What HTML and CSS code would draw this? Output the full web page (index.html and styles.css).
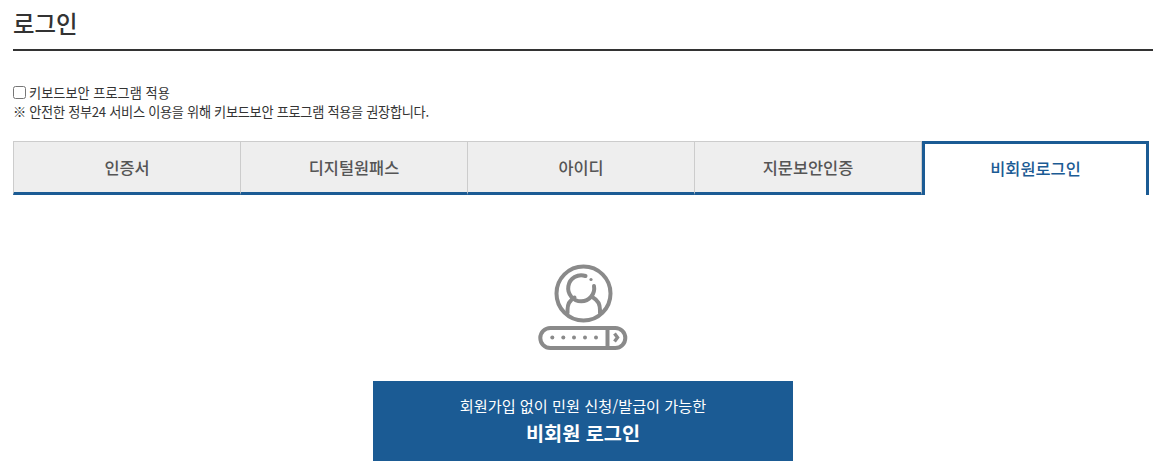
FILE: index.html
```html
<!DOCTYPE html>
<html lang="ko">
<head>
    <meta charset="UTF-8">
    <meta name="viewport" content="width=device-width, initial-scale=1.0">
    <title>로그인</title>
    <link rel="stylesheet" href="styles.css">
</head>
<body>
    <h1 class="page-title">로그인</h1>

    <div class="keyboard-option">
        <label class="check-label"><input type="checkbox"> 키보드보안 프로그램 적용</label>
        <p class="notice">※ 안전한 정부24 서비스 이용을 위해 키보드보안 프로그램 적용을 권장합니다.</p>
    </div>

    <ul class="tabs">
        <li class="tab">인증서</li>
        <li class="tab">디지털원패스</li>
        <li class="tab">아이디</li>
        <li class="tab">지문보안인증</li>
        <li class="tab active">비회원로그인</li>
    </ul>

    <div class="guest-panel">
        <svg class="guest-icon" width="130" height="110" viewBox="0 0 130 110" fill="none" stroke="#8a8a8a" stroke-width="4" stroke-linecap="round">
            <circle cx="63.5" cy="43.5" r="27"/>
            <path d="M74 36A13 13 0 1 1 65.5 26"/>
            <circle cx="71" cy="29.5" r="1.6" fill="#8a8a8a" stroke="none"/>
            <path d="M47.5 63V60C47.5 54 50 50 54.5 47.5"/>
            <path d="M80 63V60C80 54 77.5 50 73 47.5"/>
            <rect x="20.3" y="78" width="85" height="20" rx="10"/>
            <path d="M87.5 78V98" stroke-linecap="butt"/>
            <g fill="#8a8a8a" stroke="none">
                <circle cx="32.3" cy="87.5" r="2"/>
                <circle cx="43.3" cy="87.5" r="2"/>
                <circle cx="54" cy="87.5" r="2"/>
                <circle cx="65" cy="87.5" r="2"/>
                <circle cx="76" cy="87.5" r="2"/>
            </g>
            <path d="M94.5 83.5L97.5 87.5L94.5 91.5" stroke-width="3.4" stroke-linecap="butt"/>
        </svg>
        <a class="guest-button" href="#">
            <span class="guest-sub">회원가입 없이 민원 신청/발급이 가능한</span>
            <strong class="guest-main">비회원 로그인</strong>
        </a>
    </div>
</body>
</html>
```

FILE: styles.css
```css
* {
    margin: 0;
    padding: 0;
    box-sizing: border-box;
}

body {
    width: 1167px;
    height: 469px;
    padding: 0 14px 0 13px;
    overflow: hidden;
    background: #fff;
    color: #333;
    font-family: "Noto Sans CJK KR", "Noto Sans", sans-serif;
}

.page-title {
    height: 51px;
    padding-top: 5px;
    border-bottom: 2px solid #333;
    font-size: 23.4px;
    line-height: 36px;
    font-weight: 500;
}

.keyboard-option {
    margin-top: 32px;
    font-size: 13.2px;
    line-height: 19px;
}

.check-label {
    display: flex;
    align-items: center;
    gap: 3px;
    height: 19px;
}

.check-label input {
    width: 13px;
    height: 13px;
    margin: 0;
}

.notice {
    letter-spacing: -0.3px;
}

.tabs {
    display: flex;
    width: 1136px;
    height: 54px;
    margin-top: 20px;
    list-style: none;
}

.tab {
    flex: 1;
    display: flex;
    align-items: center;
    justify-content: center;
    background: #eee;
    border: 1px solid #ccc;
    border-left-width: 0;
    border-bottom: 3px solid #1b5b94;
    color: #555;
    font-size: 16.4px;
    font-weight: 500;
}

.tab:first-child {
    border-left-width: 1px;
}

.tab.active {
    flex: none;
    width: 227px;
    background: #fff;
    border: 3px solid #1b5b94;
    border-bottom: 0;
    color: #1b5b94;
    padding-bottom: 3px;
}

.guest-panel {
    display: flex;
    flex-direction: column;
    align-items: center;
    margin-top: 55px;
}

.guest-icon {
    display: block;
    margin-left: 4px;
}

.guest-button {
    display: flex;
    flex-direction: column;
    align-items: center;
    width: 420px;
    height: 80px;
    margin-top: 21px;
    padding-top: 13px;
    background: #1b5b94;
    color: #fff;
    text-decoration: none;
}

.guest-sub {
    font-size: 15.2px;
    line-height: 22px;
}

.guest-main {
    font-size: 19.7px;
    line-height: 30px;
    font-weight: 700;
    margin-top: 2px;
}
```
